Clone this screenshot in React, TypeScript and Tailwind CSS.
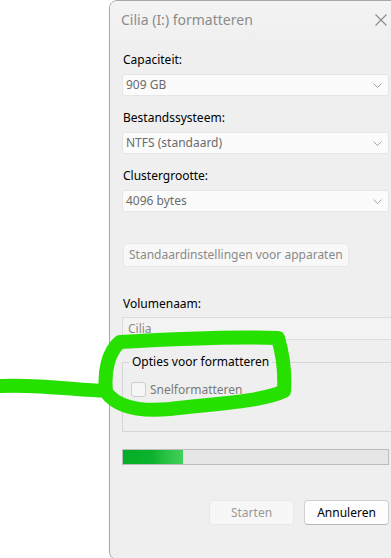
import React from "react";

const font = { fontFamily: '"Noto Sans", "Open Sans", sans-serif' };

function Chevron() {
  return (
    <svg width="9" height="5" viewBox="0 0 9 5" fill="none">
      <path d="M0.5 0.5L4.5 4.5L8.5 0.5" stroke="#a3a3a3" strokeWidth="1" />
    </svg>
  );
}

function Select({ value }: { value: string }) {
  return (
    <div className="flex h-[22px] w-[267px] items-center justify-between rounded-[3px] border border-[#e6e6e6] bg-[#fbfbfb] pl-[3px] pr-[6px]">
      <span className="text-[12px] leading-none text-[#6b6b6b]">{value}</span>
      <Chevron />
    </div>
  );
}

function Label({ children, className = "" }: { children: React.ReactNode; className?: string }) {
  return <div className={`text-[12px] leading-[16px] text-black ${className}`}>{children}</div>;
}

export default function App() {
  return (
    <div className="relative h-[558px] w-[391px] overflow-hidden bg-white" style={font}>
      {/* dialog window */}
      <div className="ml-[109px] flex h-[560px] w-[300px] flex-col overflow-hidden rounded-t-[8px] rounded-b-[8px] border border-[#a8a8a8] bg-[#efefef]">
        {/* title bar */}
        <div className="flex h-[38px] shrink-0 items-center justify-between bg-gradient-to-b from-[#f4f4f4] to-[#f0f0f0] pl-[11px] pr-[21px]">
          <span className="text-[14px] leading-none text-[#8b8b8b]">Cilia (I:) formatteren</span>
          <svg width="12" height="12" viewBox="0 0 12 12" fill="none">
            <path d="M0.5 0.5L11.5 11.5M11.5 0.5L0.5 11.5" stroke="#8a8a8a" strokeWidth="1.1" />
          </svg>
        </div>

        {/* body */}
        <div className="flex flex-col pl-[12px] pt-[13px]">
          <Label className="pl-[1px]">Capaciteit:</Label>
          <div className="mt-[6px]">
            <Select value="909 GB" />
          </div>

          <Label className="mt-[14px] pl-[1px]">Bestandssysteem:</Label>
          <div className="mt-[6px]">
            <Select value="NTFS (standaard)" />
          </div>

          <Label className="mt-[14px] pl-[1px]">Clustergrootte:</Label>
          <div className="mt-[6px]">
            <Select value="4096 bytes" />
          </div>

          <div className="mt-[31px] flex">
            <div className="ml-[1px] flex h-[24px] items-center rounded-[4px] border border-[#e8e8e8] bg-[#f8f8f8] px-[5px] text-[12px] text-[#8a8a8a]">
              Standaardinstellingen voor apparaten
            </div>
          </div>

          <Label className="mt-[29px] pl-[1px]">Volumenaam:</Label>
          <div className="mt-[5px] flex h-[23px] w-[279px] items-center border border-[#dcdcdc] bg-[#f3f3f3] pl-[5px] text-[12px] text-[#8a8a8a]">
            Cilia
          </div>

          {/* group box */}
          <div className="relative mt-[22px] h-[70px] w-[279px] border border-[#d6d6d6]">
            <div className="absolute left-[6px] top-[-9px] bg-[#efefef] px-[3px] text-[12px] leading-[16px] text-black">
              Opties voor formatteren
            </div>
            <div className="ml-[8px] mt-[19px] flex items-center gap-[4px]">
              <div className="h-[15px] w-[15px] rounded-[3px] border border-[#cdcdcd] bg-[#f6f6f6]" />
              <span className="text-[12px] leading-none text-[#7a7a7a]">Snelformatteren</span>
            </div>
          </div>

          {/* progress */}
          <div className="mt-[17px] h-[16px] w-[267px] border border-[#bcbcbc] bg-[#e6e6e6]">
            <div className="h-full w-[60px] bg-gradient-to-r from-[#06ad26] via-[#0bb42c] to-[#40d25c]" />
          </div>

          {/* buttons */}
          <div className="mt-[35px] flex w-[267px] justify-end gap-[10px]">
            <div className="flex h-[25px] w-[85px] items-center justify-center rounded-[4px] border border-[#e8e8e8] bg-[#f7f7f7] text-[12px] text-[#9a9a9a]">
              Starten
            </div>
            <div className="flex h-[25px] w-[85px] items-center justify-center rounded-[4px] border border-[#d0d0d0] border-b-[#b8b8b8] bg-[#fdfdfd] text-[12px] text-black">
              Annuleren
            </div>
          </div>
        </div>
      </div>

      {/* green marker annotation */}
      <svg
        className="pointer-events-none absolute left-0 top-0"
        width="391"
        height="558"
        viewBox="0 0 391 558"
        fill="none"
      >
        <path
          d="M0 386 C40 384 75 390 106 391 C104 372 108 352 120 342 C170 339 232 336 278 338 C283 355 285 375 284 391 C262 402 210 404 170 409 C138 412 116 406 106 392"
          stroke="#26e000"
          strokeWidth="14"
          strokeLinecap="round"
          strokeLinejoin="round"
        />
      </svg>
    </div>
  );
}
